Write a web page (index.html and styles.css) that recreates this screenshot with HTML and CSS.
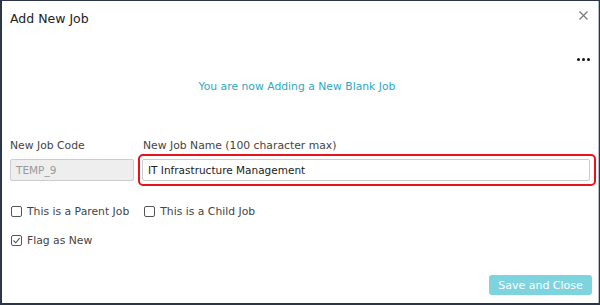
FILE: index.html
```html
<!DOCTYPE html>
<html lang="en">
<head>
    <meta charset="UTF-8">
    <title>Add New Job</title>
    <link rel="stylesheet" href="styles.css">
</head>
<body>
    <div class="dialog">
        <div class="dialog-header">
            <h1>Add New Job</h1>
            <svg class="close" width="9" height="9" viewBox="0 0 9 9">
                <path d="M0.5 0.5 L8.5 8.5 M8.5 0.5 L0.5 8.5" stroke="#7a7a7a" stroke-width="1.2" fill="none"/>
            </svg>
        </div>

        <div class="more">
            <span></span><span></span><span></span>
        </div>
        <p class="notice">You are now Adding a New Blank Job</p>

        <div class="fields">
            <div class="field code-field">
                <label>New Job Code</label>
                <div class="input disabled">TEMP_9</div>
            </div>
            <div class="field name-field">
                <label>New Job Name (100 character max)</label>
                <div class="highlight">
                    <input class="input" type="text" value="IT Infrastructure Management">
                </div>
            </div>
        </div>

        <div class="checks">
            <label class="check"><span class="box"></span>This is a Parent Job</label>
            <label class="check"><span class="box"></span>This is a Child Job</label>
        </div>
        <div class="checks">
            <label class="check">
                <span class="box">
                    <svg width="9" height="9" viewBox="0 0 9 9">
                        <path d="M1.5 4.5 L3.8 6.8 L7.6 2.2" stroke="#555" stroke-width="1.1" fill="none"/>
                    </svg>
                </span>Flag as New
            </label>
        </div>

        <div class="footer">
            <button>Save and Close</button>
        </div>
    </div>
</body>
</html>
```

FILE: styles.css
```css
* {
    margin: 0;
    padding: 0;
    box-sizing: border-box;
}

html, body {
    height: 100%;
}

body {
    background-color: #2b3748;
    padding: 1px 1px 2px 2px;
    font-family: 'DejaVu Sans', Verdana, sans-serif;
    font-size: 10.8px;
    color: #333;
}

.dialog {
    background-color: white;
    height: 100%;
    border-right: 1px solid #b8bcc2;
    position: relative;
}

.dialog-header {
    display: flex;
    justify-content: space-between;
    align-items: flex-start;
    padding: 10px 10px 0 8px;
}

.dialog-header h1 {
    font-size: 12.5px;
    font-weight: normal;
    color: #222;
}

.more {
    display: flex;
    justify-content: flex-end;
    gap: 2px;
    padding-right: 8px;
    margin-top: 32px;
}

.more span {
    width: 3px;
    height: 3px;
    border-radius: 50%;
    background-color: #111;
}

.notice {
    text-align: center;
    color: #2ea8c2;
    margin-top: 19px;
    padding-right: 6px;
}

.fields {
    display: flex;
    gap: 4px;
    margin-top: 46px;
    padding-left: 8px;
    padding-right: 2px;
}

.field label {
    display: block;
    margin-bottom: 7px;
    color: #444;
}

.code-field {
    width: 124px;
}

.name-field {
    flex: 1;
}

.name-field label {
    padding-left: 5px;
}

.input {
    display: block;
    width: 100%;
    height: 22px;
    line-height: 20px;
    border: 1px solid #ccc;
    border-radius: 2px;
    padding: 0 5px;
    font-family: 'DejaVu Sans', Verdana, sans-serif;
    font-size: 10.5px;
    color: #222;
    background: white;
}

.input.disabled {
    background-color: #eee;
    color: #999;
    margin-top: 1px;
}

.highlight {
    border: 2px solid #e8141c;
    border-radius: 5px;
    padding: 3px 4px 3px 2px;
    margin-top: -5px;
}

.checks {
    display: flex;
    gap: 15px;
    padding-left: 9px;
    margin-top: 19px;
}

.checks + .checks {
    margin-top: 16px;
}

.check {
    display: flex;
    align-items: center;
    gap: 5px;
    color: #444;
}

.box {
    display: flex;
    align-items: center;
    justify-content: center;
    width: 11px;
    height: 11px;
    border: 1px solid #555;
    border-radius: 2px;
}

.footer {
    position: absolute;
    right: 6px;
    bottom: 8px;
}

button {
    background-color: #7dd3de;
    color: white;
    border: none;
    border-radius: 3px;
    font-family: 'DejaVu Sans', Verdana, sans-serif;
    font-size: 11px;
    white-space: nowrap;
    height: 20px;
    width: 103px;
}
```
